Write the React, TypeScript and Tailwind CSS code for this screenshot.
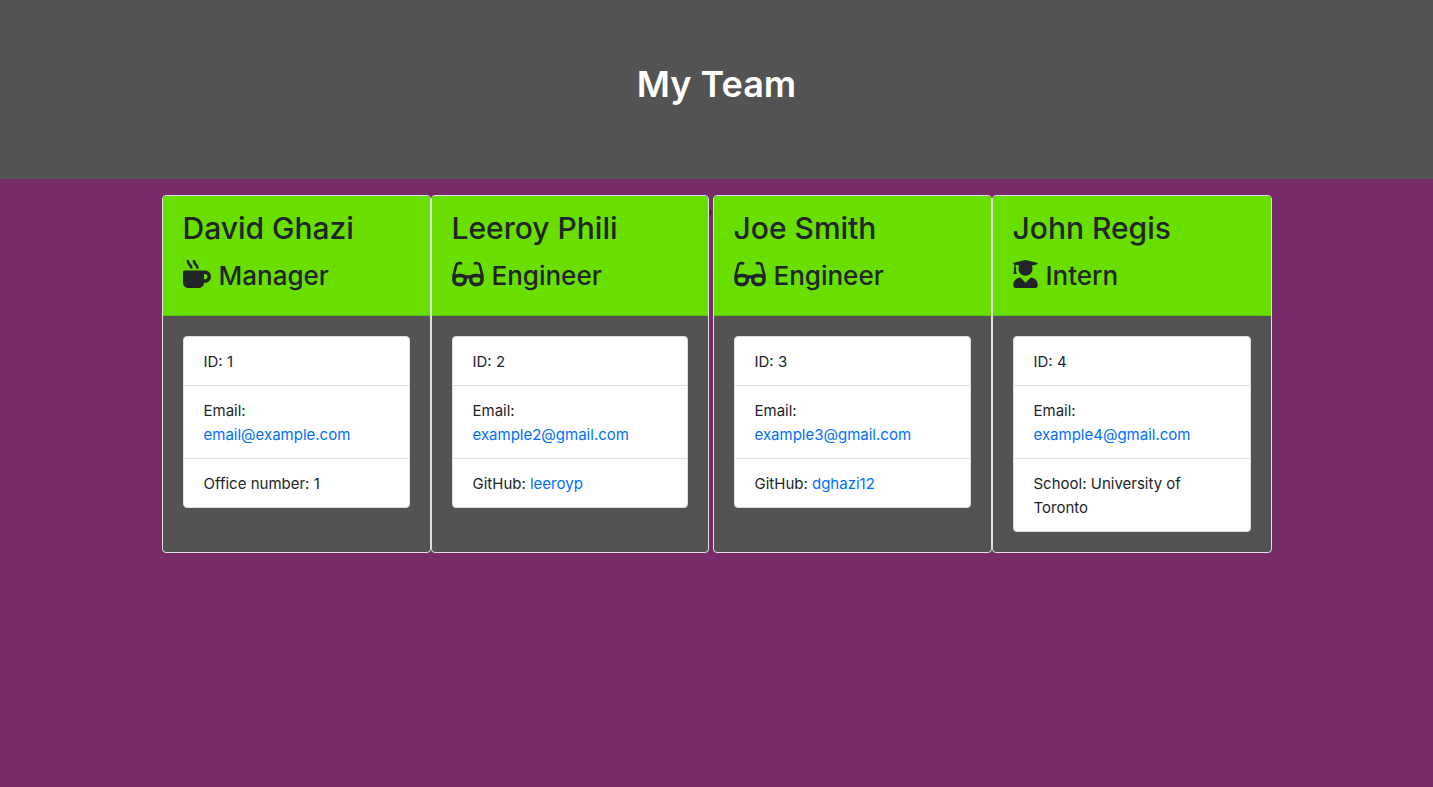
import { FaMugHot, FaGlasses, FaUserGraduate } from "react-icons/fa";
import type { IconType } from "react-icons";

type Detail = { label: string; value: string; href?: string };
type Member = {
  name: string;
  role: string;
  icon: IconType;
  iconWidth: string;
  width: string;
  details: Detail[];
};

const members: Member[] = [
  {
    name: "David Ghazi", role: "Manager", icon: FaMugHot, iconWidth: "w-7", width: "w-[269px]",
    details: [
      { label: "ID:", value: "1" },
      { label: "Email:", value: "email@example.com", href: "mailto:email@example.com" },
      { label: "Office number:", value: "1" },
    ],
  },
  {
    name: "Leeroy Phili", role: "Engineer", icon: FaGlasses, iconWidth: "w-8", width: "w-[278px]",
    details: [
      { label: "ID:", value: "2" },
      { label: "Email:", value: "example2@gmail.com", href: "mailto:example2@gmail.com" },
      { label: "GitHub:", value: "leeroyp", href: "https://github.com/leeroyp" },
    ],
  },
  {
    name: "Joe Smith", role: "Engineer", icon: FaGlasses, iconWidth: "w-8", width: "w-[279px]",
    details: [
      { label: "ID:", value: "3" },
      { label: "Email:", value: "example3@gmail.com", href: "mailto:example3@gmail.com" },
      { label: "GitHub:", value: "dghazi12", href: "https://github.com/dghazi12" },
    ],
  },
  {
    name: "John Regis", role: "Intern", icon: FaUserGraduate, iconWidth: "w-[25px]", width: "w-[280px]",
    details: [
      { label: "ID:", value: "4" },
      { label: "Email:", value: "example4@gmail.com", href: "mailto:example4@gmail.com" },
      { label: "School:", value: "University of Toronto" },
    ],
  },
];

function MemberCard({ member }: { member: Member }) {
  const Icon = member.icon;
  return (
    <article className={`${member.width} flex flex-col overflow-hidden rounded border border-[#dfdfdf] bg-[#535353]`}>
      <header className="border-b border-[#5fc500] bg-[#69df00] px-5 pt-3 pb-[19px] font-medium">
        <h2 className="mb-2 text-[30px] leading-10">{member.name}</h2>
        <h3 className="flex items-center gap-2 text-[26px] leading-10">
          <Icon className={`${member.iconWidth} mb-1 h-7 shrink-0`} aria-hidden="true" />
          {member.role}
        </h3>
      </header>
      <div className="p-5">
        <ul className="divide-y divide-[#dfdfdf] rounded border border-[#dfdfdf] bg-white">
          {member.details.map((d) => (
            <li key={d.label} className="pt-[13px] pr-12 pb-[11px] pl-5">
              {d.href ? (
                <>
                  {d.label}{" "}
                  <a className="inline-block text-[#006fff] hover:underline" href={d.href}>{d.value}</a>
                </>
              ) : (
                `${d.label} ${d.value}`
              )}
            </li>
          ))}
        </ul>
      </div>
    </article>
  );
}

export default function App() {
  return (
    <div className="min-h-screen bg-[#772b69] font-['Inter',sans-serif] text-[15px] leading-6 text-[#212529]">
      <header className="mb-4 bg-[#535353] px-8 pt-[60px] pb-[71px]">
        <h1 className="text-center text-[36px] leading-12 font-semibold text-white">My Team</h1>
      </header>
      <main className="flex flex-wrap justify-center gap-y-4">
        <div className="flex">
          {members.slice(0, 2).map((m) => <MemberCard key={m.name} member={m} />)}
        </div>
        <span className="w-1">,</span>
        <div className="flex">
          {members.slice(2).map((m) => <MemberCard key={m.name} member={m} />)}
        </div>
      </main>
    </div>
  );
}
